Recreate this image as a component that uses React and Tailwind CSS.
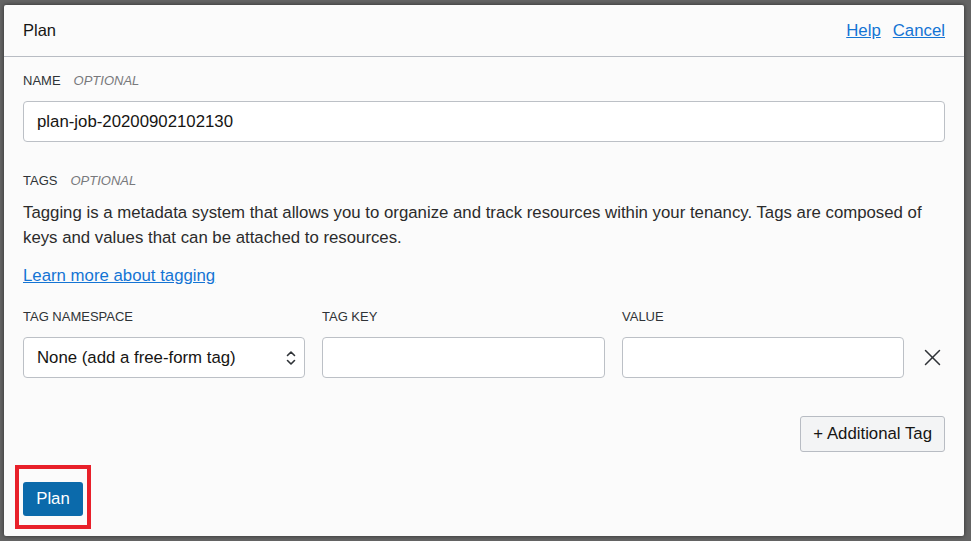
import React from 'react'

const font = { fontFamily: '"Liberation Sans", Arial, sans-serif' }

const Label = ({ children, optional }) => (
  <div className="flex items-center h-4 text-[13px] leading-4 text-[#2f3337] uppercase">
    <span>{children}</span>
    {optional && <span className="ml-[13px] italic text-[#78797c]">Optional</span>}
  </div>
)

const TextBox = ({ value, className = '' }) => (
  <div
    className={`h-[41px] bg-white border border-[#bcc0c6] rounded-[4px] flex items-center px-[13px] text-[16.8px] text-[#161513] ${className}`}
  >
    {value}
  </div>
)

const App = () => {
  return (
    <div style={font} className="w-[971px] h-[541px] bg-[#646464] pl-[4px] pt-[5px] overflow-hidden">
      <div className="w-[960px] h-[531px] bg-[#fbfbfb] rounded-[2px] shadow-[0_0_4px_rgba(0,0,0,0.55)] flex flex-col">
        {/* Header */}
        <div className="h-[52px] border-b border-[#b8bcc3] px-[19px] flex items-center justify-between">
          <span className="text-[16.5px] text-[#161513]">Plan</span>
          <div className="flex items-center gap-[12px] text-[16.8px] text-[#1474d4] underline">
            <span>Help</span>
            <span>Cancel</span>
          </div>
        </div>

        {/* Body */}
        <div className="flex-1 flex flex-col px-[19px] pt-[16px]">
          <Label optional>Name</Label>
          <TextBox value="plan-job-20200902102130" className="mt-[12px]" />

          <div className="mt-[31px]">
            <Label optional>Tags</Label>
          </div>
          <p className="mt-[11px] text-[16.8px] leading-[25px] text-[#2b2b2b]">
            Tagging is a metadata system that allows you to organize and track resources within your tenancy. Tags are composed of keys and values that can be attached to resources.
          </p>
          <div className="mt-[13px] text-[16.8px] leading-[25px] text-[#1474d4] underline">
            Learn more about tagging
          </div>

          <div className="mt-[21px] flex gap-[17px]">
            <div className="w-[282px] flex flex-col">
              <Label>Tag Namespace</Label>
              <div className="mt-[12px] h-[41px] bg-white border border-[#bcc0c6] rounded-[4px] flex items-center justify-between pl-[13px] pr-[7px] text-[16.8px] text-[#161513]">
                <span>None (add a free-form tag)</span>
                <svg width="12" height="18" viewBox="0 0 12 18" fill="none" stroke="#2f3337" strokeWidth="1.6" strokeLinecap="round" strokeLinejoin="round">
                  <path d="M2.5 6.5 L6 3 L9.5 6.5" />
                  <path d="M2.5 11.5 L6 15 L9.5 11.5" />
                </svg>
              </div>
            </div>
            <div className="w-[283px] flex flex-col">
              <Label>Tag Key</Label>
              <TextBox value="" className="mt-[12px]" />
            </div>
            <div className="w-[282px] flex flex-col">
              <Label>Value</Label>
              <TextBox value="" className="mt-[12px]" />
            </div>
            <div className="flex-1 flex items-end justify-end pb-[12px] pr-[4px]">
              <svg width="17" height="17" viewBox="0 0 17 17" stroke="#2f3337" strokeWidth="1.5" strokeLinecap="round">
                <path d="M1.5 1.5 L15.5 15.5" />
                <path d="M15.5 1.5 L1.5 15.5" />
              </svg>
            </div>
          </div>

          <div className="mt-[38px] flex justify-end">
            <div className="h-[36px] px-[12px] flex items-center bg-[#f3f4f5] border border-[#b8bcc3] rounded-[3px] text-[16.8px] text-[#161513]">
              + Additional Tag
            </div>
          </div>

          <div className="mt-[30px] flex">
            <div className="relative">
              <div className="h-[34px] w-[60px] flex items-center justify-center bg-[#0b6aab] rounded-[3px] text-[16.8px] text-white">
                Plan
              </div>
              <div className="absolute -left-[8px] -right-[8px] -top-[17px] -bottom-[13px] border-4 border-[#e8202a]" />
            </div>
          </div>
        </div>
      </div>
    </div>
  )
}

export default App
